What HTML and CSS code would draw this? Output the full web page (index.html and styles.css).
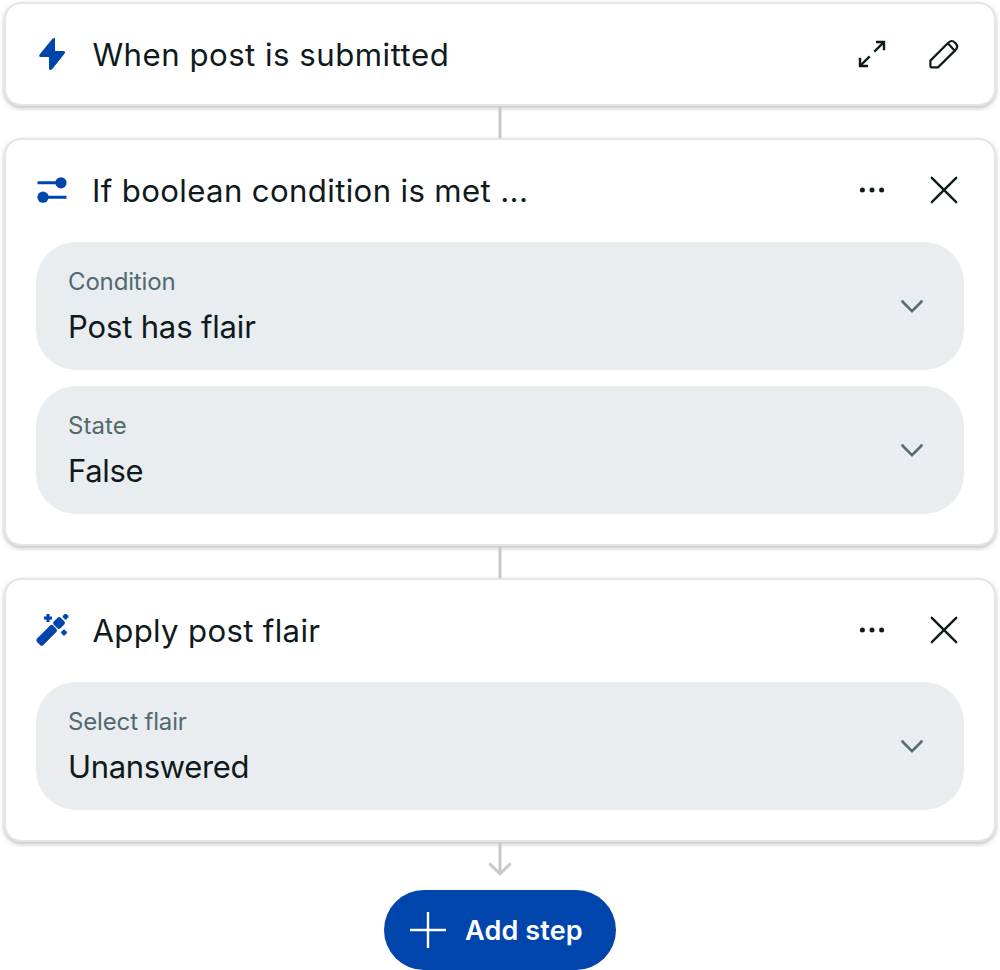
FILE: index.html
```html
<!DOCTYPE html>
<html lang="en">
<head>
<meta charset="utf-8">
<title>Automation</title>
<link rel="stylesheet" href="styles.css">
</head>
<body>
<main class="flow">
  <section class="card">
    <header class="card-header">
      <svg class="icon" viewBox="0 0 32 32"><path class="solid" d="M16.6.5Q19-.9 19 1.3V13h8.2q3 .2 1.2 2.8L16.4 31q-3.4 2.2-3.4-.8V19H5q-3-.2-1.2-2.8Z"/></svg>
      <h2 class="title title-submit">When post is submitted</h2>
      <div class="actions">
        <svg class="action" viewBox="0 0 40 40"><path class="line" d="M22.3 17.7 32 8M24 8h8v8.2M17.7 22.3 8 32M8 23.8V32h8"/></svg>
        <svg class="action" viewBox="0 0 40 40"><path class="line pencil" d="M6.4 26.6 24 9q3.6-3.8 7-.3l.6.6q3.3 3.5-.4 7.1L14 33.3H7.4q-1 0-1-1ZM23.8 9.3l7 7.4"/></svg>
      </div>
    </header>
  </section>
  <svg class="connector" viewBox="0 0 4 32"><path d="M2 0v32"/></svg>
  <section class="card">
    <header class="card-header">
      <svg class="icon" viewBox="0 0 32 32"><path class="bar" d="M1.5 8.8H26M6 23.2h24.5"/><circle class="solid" cx="25" cy="8.8" r="5.6"/><circle class="solid" cx="7" cy="23.2" r="5.6"/></svg>
      <h2 class="title title-condition">If boolean condition is met ...</h2>
      <div class="actions">
        <svg class="action dots" viewBox="0 0 40 40"><circle cx="10.4" cy="20" r="2.5"/><circle cx="20" cy="20" r="2.5"/><circle cx="29.6" cy="20" r="2.5"/></svg>
        <svg class="action" viewBox="0 0 40 40"><path class="line cross" d="M7.8 7.8 32.2 32.2M32.2 7.8 7.8 32.2"/></svg>
      </div>
    </header>
    <div class="fields">
      <div class="field">
        <div class="field-text"><span class="label">Condition</span><span class="value value-condition">Post has flair</span></div>
        <svg class="chevron" viewBox="0 0 40 40"><path d="m10.4 15.5 9.6 9.6 9.6-9.6"/></svg>
      </div>
      <div class="field">
        <div class="field-text"><span class="label label-state">State</span><span class="value value-state">False</span></div>
        <svg class="chevron" viewBox="0 0 40 40"><path d="m10.4 15.5 9.6 9.6 9.6-9.6"/></svg>
      </div>
    </div>
  </section>
  <svg class="connector" viewBox="0 0 4 32"><path d="M2 0v32"/></svg>
  <section class="card">
    <header class="card-header">
      <svg class="icon" viewBox="0 0 32 32"><g class="solid"><rect x="-4.5" y="-11.6" width="9" height="23" rx="2.4" transform="translate(10.6 21.4) rotate(45)"/><rect x="-4.7" y="-4.9" width="9.4" height="9.8" rx="2.2" transform="translate(23 9) rotate(45)"/><path d="M10.5 0h3v2.5H16v3h-2.5V8h-3V5.5H8v-3h2.5ZM28.5 0h2.2l.4 1.1 1.3.4v2.2l-1.3.4-.4 1.3h-2.2l-.4-1.3-1.3-.4V1.5l1.3-.4ZM26.9 15.8h2.2l.4 1.3 1.3.4v2.2l-1.3.4-.4 1.3h-2.2l-.4-1.3-1.3-.4v-2.2l1.3-.4Z"/></g></svg>
      <h2 class="title title-apply">Apply post flair</h2>
      <div class="actions">
        <svg class="action dots" viewBox="0 0 40 40"><circle cx="10.4" cy="20" r="2.5"/><circle cx="20" cy="20" r="2.5"/><circle cx="29.6" cy="20" r="2.5"/></svg>
        <svg class="action" viewBox="0 0 40 40"><path class="line cross" d="M7.8 7.8 32.2 32.2M32.2 7.8 7.8 32.2"/></svg>
      </div>
    </header>
    <div class="fields">
      <div class="field">
        <div class="field-text"><span class="label">Select flair</span><span class="value value-flair">Unanswered</span></div>
        <svg class="chevron" viewBox="0 0 40 40"><path d="m10.4 15.5 9.6 9.6 9.6-9.6"/></svg>
      </div>
    </div>
  </section>
  <svg class="arrow" viewBox="0 0 24 36"><path d="M12 0v31.5M2.2 22.2 12 32l9.8-9.8"/></svg>
  <button class="add-step" type="button">
    <svg class="plus" viewBox="0 0 36 36"><path d="M18 0v36M0 18h36"/></svg>
    <span class="add-label">Add step</span>
  </button>
</main>
</body>
</html>
```
FILE: styles.css
```css
* { box-sizing: border-box; }
body { margin: 0; background: #fff; color: #0f1a1c; font-family: Inter, "Liberation Sans", sans-serif; }
svg { display: block; flex: none; }
.flow { display: flex; flex-direction: column; align-items: center; padding: 2px 4px 0; }
.card { width: 100%; background: #fff; border: 2px solid #e5e5e5; border-radius: 17px; box-shadow: 0 2px 4px rgba(0, 0, 0, .25); }
.card-header { display: flex; align-items: center; height: 100px; padding: 0 30px; }
.icon { width: 32px; height: 32px; overflow: visible; }
.solid { fill: #0045ac; }
.bar { stroke: #0045ac; stroke-width: 3; }
.title { margin: 1px 0 0 24.4px; font-size: 31.2px; line-height: 40px; font-weight: 400; white-space: nowrap; }
.title-submit { letter-spacing: .49px; }
.title-condition { margin-left: 24px; letter-spacing: .35px; }
.title-apply { letter-spacing: .32px; }
.actions { display: flex; gap: 32px; margin-left: auto; }
.action { width: 40px; height: 40px; }
.line { fill: none; stroke: #0f1a1c; stroke-width: 2.4; }
.pencil { stroke-width: 2.2; }
.cross { stroke-linecap: round; }
.dots { fill: #0f1a1c; }
.connector { width: 4px; height: 32px; }
.connector path { stroke: #c9c9c9; stroke-width: 3; }
.fields { display: flex; flex-direction: column; gap: 16px; padding: 2px 30px 30px; }
.field { display: flex; align-items: center; justify-content: space-between; height: 128px; padding: 0 32px; border-radius: 40px; background: #e9edef; }
.field-text { display: flex; flex-direction: column; white-space: nowrap; }
.label { font-size: 24px; line-height: 32px; letter-spacing: -.15px; color: #526970; }
.label-state { letter-spacing: .05px; }
.value { margin: 9px 0 0; font-size: 31px; line-height: 40px; }
.value-condition { letter-spacing: -.15px; }
.value-state { letter-spacing: -.3px; }
.value-flair { letter-spacing: -.35px; }
.chevron { width: 40px; height: 40px; }
.chevron path { fill: none; stroke: #576f76; stroke-width: 2.7; stroke-linecap: round; }
.arrow { width: 24px; height: 36px; }
.arrow path { fill: none; stroke: #c9c9c9; stroke-width: 3; stroke-linecap: round; }
.add-step { display: flex; align-items: center; width: 232px; height: 80px; margin-top: 12px; padding: 0 26px; border: 0; border-radius: 40px; background: #0045ac; color: #fff; font: 600 27px/40px Inter, "Liberation Sans", sans-serif; white-space: nowrap; }
.plus { width: 36px; height: 36px; }
.plus path { stroke: #fff; stroke-width: 2.4; }
.add-label { margin: 1px 0 0 19px; letter-spacing: .15px; }
```
